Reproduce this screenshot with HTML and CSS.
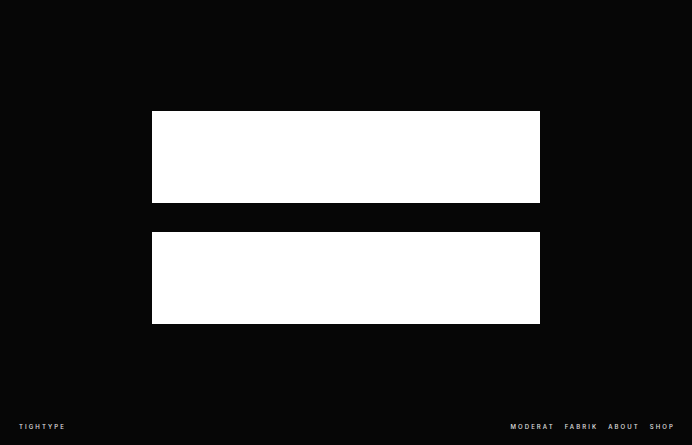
FILE: index.html
```html
<!DOCTYPE html>
<html lang="en">
<head>
<meta charset="utf-8">
<title>Tightype</title>
<link rel="stylesheet" href="styles.css">
</head>
<body>
<main class="stage">
  <div class="bar"></div>
  <div class="bar"></div>
</main>
<footer class="footer">
  <a class="brand" href="#">TIGHTYPE</a>
  <nav class="nav">
    <a href="#">MODERAT</a>
    <a href="#">FABRIK</a>
    <a href="#">ABOUT</a>
    <a href="#">SHOP</a>
  </nav>
</footer>
</body>
</html>
```
FILE: styles.css
```css
html, body {
  margin: 0;
  padding: 0;
  height: 100%;
}
body {
  background: #060606;
  color: #e0e0e0;
  font-family: Inter, "Liberation Sans", sans-serif;
  display: flex;
  flex-direction: column;
  height: 445px;
  overflow: hidden;
}
.stage {
  display: flex;
  flex-direction: column;
  align-items: center;
  gap: 29px;
  padding-top: 111px;
}
.bar {
  width: 388px;
  height: 92px;
  background: #ffffff;
}
.footer {
  margin-top: auto;
  display: flex;
  justify-content: space-between;
  align-items: center;
  padding: 0 17px 14px 19px;
  font-size: 6px;
  font-weight: 500;
  letter-spacing: 2.1px;
  line-height: 8px;
}
.footer a {
  color: #e0e0e0;
  text-decoration: none;
}
.nav {
  display: flex;
  gap: 10px;
}
```
